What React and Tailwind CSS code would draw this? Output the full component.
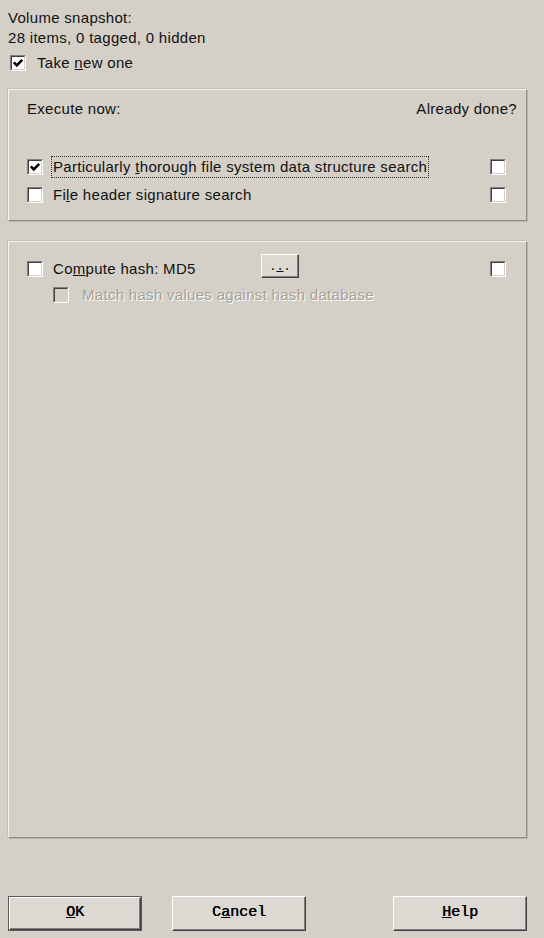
import React from "react";

function Check({ checked = false, disabled = false }) {
  return (
    <span
      className={
        disabled
          ? "relative block w-4 h-4 shrink-0 bg-[#d4d0c8] border border-t-[#808080] border-l-[#808080] border-b-white border-r-white"
          : "relative block w-4 h-4 shrink-0 bg-white border border-t-[#808080] border-l-[#808080] border-b-white border-r-white"
      }
    >
      <span className="absolute inset-0 border border-t-[#404040] border-l-[#404040] border-b-[#d4d0c8] border-r-[#d4d0c8]" />
      {checked && (
        <svg className="absolute inset-0" width="14" height="14" viewBox="0 0 14 14">
          <path d="M2.8 6.3 L5.8 9.4 L11.2 3.8" fill="none" stroke="#000" strokeWidth="2.5" />
        </svg>
      )}
    </span>
  );
}

// raised panel look of the group frames
function Group({ className, children }) {
  return (
    <div
      className={
        "ml-2 mr-[17px] border border-t-[#f2f1ee] border-l-[#f2f1ee] border-b-[#8e8b84] border-r-[#8e8b84] shadow-[1px_1px_0_#b9b6ae,-1px_-1px_0_#c4c1ba] " +
        className
      }
    >
      {children}
    </div>
  );
}

function DlgButton({ children, isDefault = false, className = "" }) {
  return (
    <button
      type="button"
      className={
        (isDefault ? "border border-[#5a5a5a] p-0 " : "p-0 ") +
        "h-[35px] w-[134px] " +
        className
      }
    >
      <span className="flex h-full w-full items-center justify-center bg-[#dcd9d2] border border-t-white border-l-white border-b-[#404040] border-r-[#404040] shadow-[inset_-1px_-1px_0_#808080] font-['Liberation_Mono',monospace] text-[15px] text-black [text-shadow:0.4px_0_0_#000]">
        {children}
      </span>
    </button>
  );
}

export default function App() {
  return (
    <div className="w-[544px] h-[938px] bg-[#d4d0c8] font-['Liberation_Sans',Arial,sans-serif] text-[15px] tracking-[0.3px] text-[#111] flex flex-col">
      <div className="px-2 pt-2 leading-[20px]">
        <div>Volume snapshot:</div>
        <div>28 items, 0 tagged, 0 hidden</div>
        <div className="mt-[5px] flex h-5 items-center pl-[2px] gap-[11px]">
          <Check checked />
          <span>
            Take <u>n</u>ew one
          </span>
        </div>
      </div>

      <Group className="mt-4 h-[132px] pt-[9px] pl-[18px] pr-[9px] leading-[20px]">
        <div className="flex justify-between">
          <span>Execute now:</span>
          <span>Already done?</span>
        </div>
        <div className="mt-[38px] flex h-5 items-center pr-[11px]">
          <Check checked />
          <span className="ml-[8px] border border-dotted border-[#333] px-[1px] leading-[20px]">
            Particularly <u>t</u>horough file system data structure search
          </span>
          <span className="ml-auto">
            <Check />
          </span>
        </div>
        <div className="mt-2 flex h-5 items-center pr-[11px]">
          <Check />
          <span className="ml-[10px]">
            Fi<u>l</u>e header signature search
          </span>
          <span className="ml-auto">
            <Check />
          </span>
        </div>
      </Group>

      <Group className="mt-5 h-[597px] pt-[17px] pl-[18px] pr-[20px] leading-[20px]">
        <div className="flex h-5 items-center">
          <Check />
          <span className="ml-[10px] w-[208px]">
            Co<u>m</u>pute hash: MD5
          </span>
          <button
            type="button"
            className="-mt-[6px] h-[24px] w-[38px] bg-[#dcd9d2] border border-t-white border-l-white border-b-[#404040] border-r-[#404040] shadow-[inset_-1px_-1px_0_#808080] flex items-end justify-center pb-[4px] font-['Liberation_Mono',monospace] text-[12px] leading-[12px] tracking-normal"
          >
            .<u>.</u>.
          </button>
          <span className="ml-auto">
            <Check />
          </span>
        </div>
        <div className="mt-[6px] flex h-5 items-center pl-[26px]">
          <Check disabled />
          <span className="ml-[13px] text-[#a4a19a] [text-shadow:1px_1px_0_#fff]">
            Match hash values against hash database
          </span>
        </div>
      </Group>

      <div className="mt-[58px] flex pl-[8px] tracking-normal">
        <DlgButton isDefault>
          <u>O</u>K
        </DlgButton>
        <DlgButton className="ml-[30px]">
          C<u>a</u>ncel
        </DlgButton>
        <DlgButton className="ml-[87px]">
          <u>H</u>elp
        </DlgButton>
      </div>
    </div>
  );
}
